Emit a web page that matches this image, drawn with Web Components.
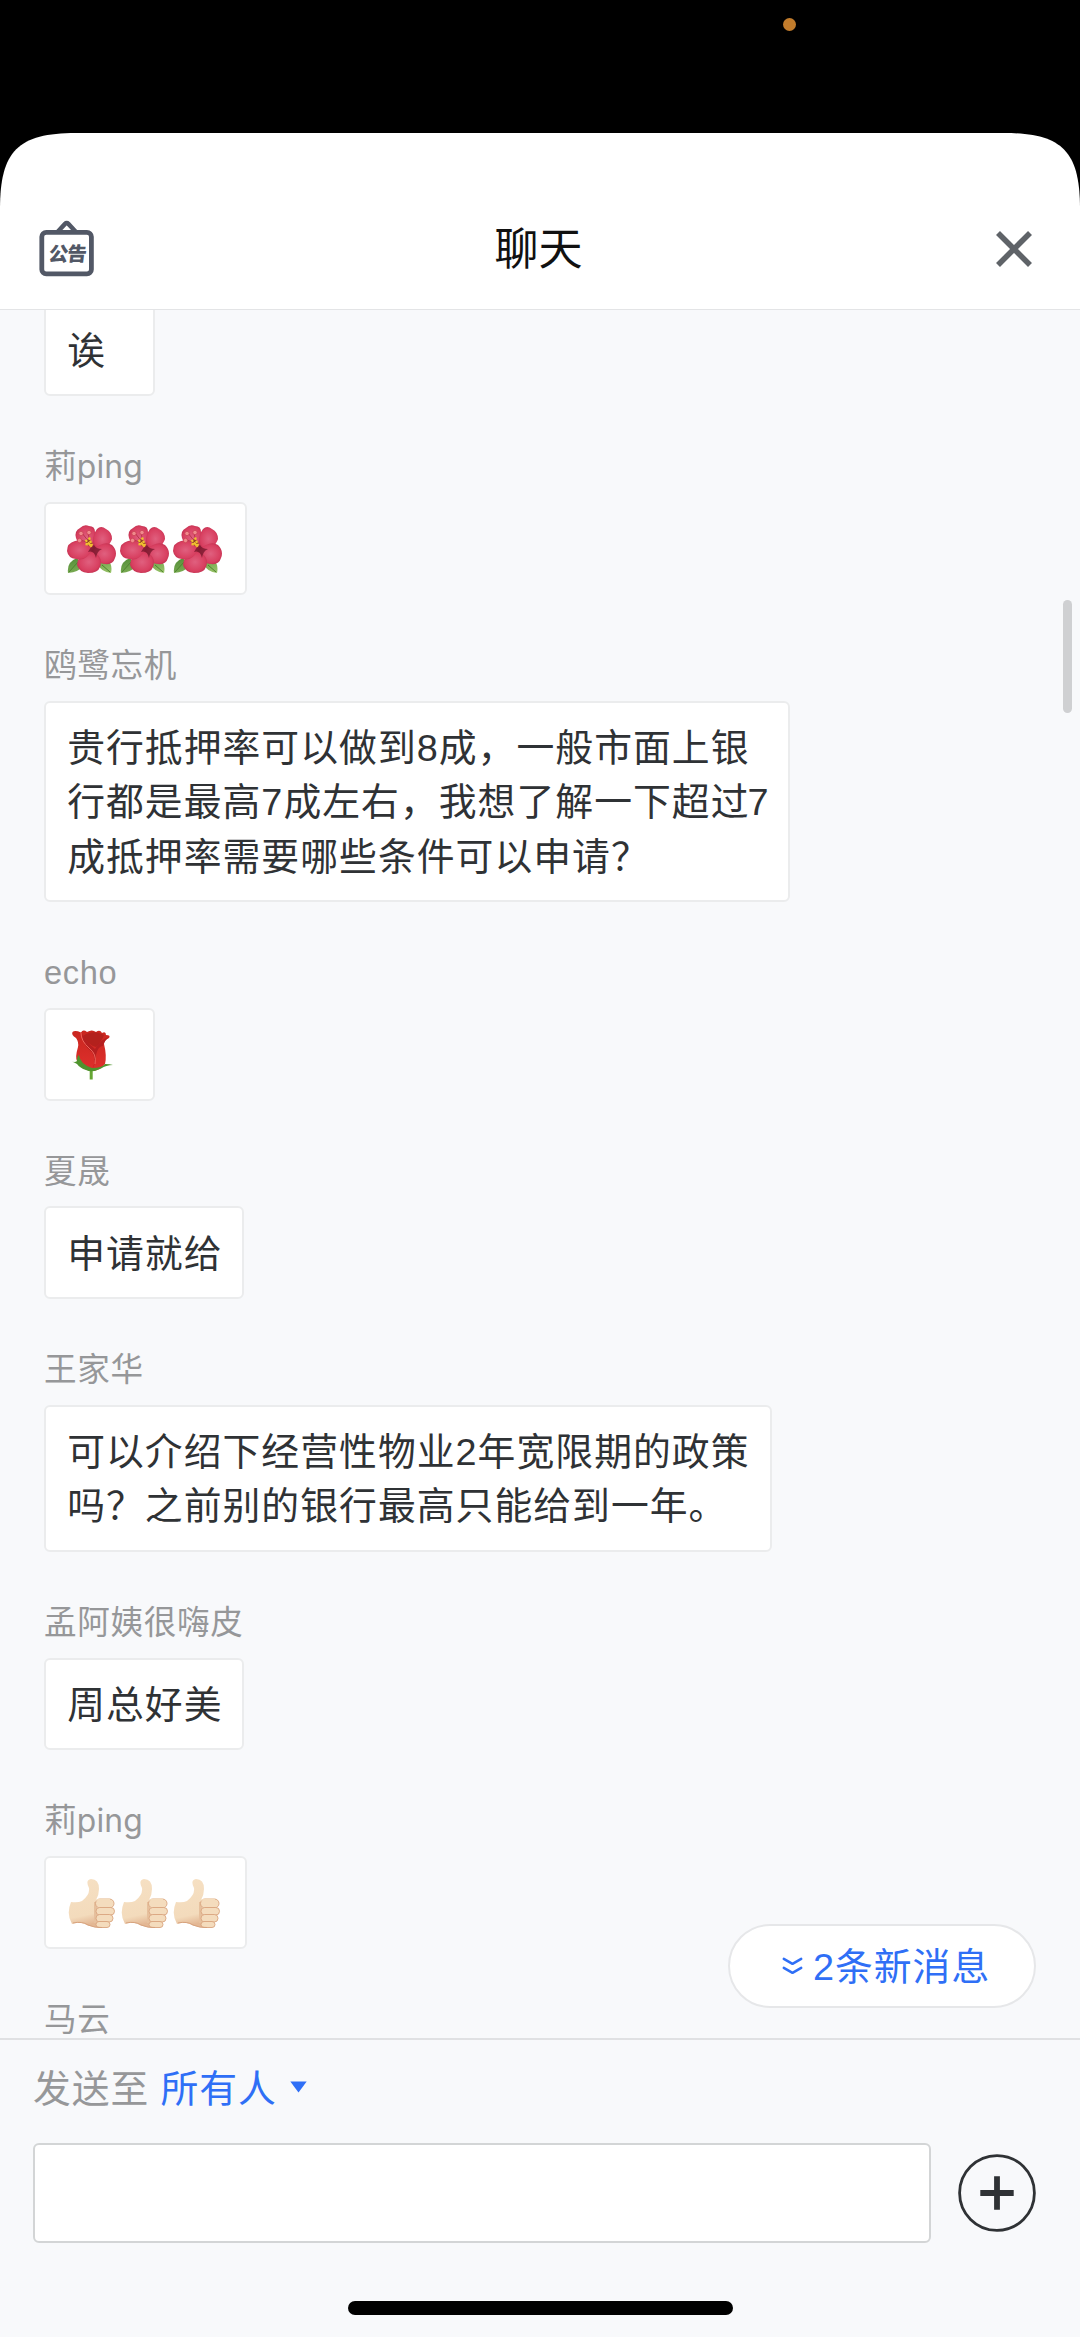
<!DOCTYPE html>
<html lang="zh-CN">
<head>
<meta charset="utf-8">
<title>聊天</title>
<style>
html,body{margin:0;padding:0;background:#000}
body{font-family:"Liberation Sans","Noto Sans CJK SC",sans-serif;width:1080px;height:2337px;overflow:hidden}
</style>
</head>
<body>
<chat-screen></chat-screen>
<script>
const define = (name, html) => {
  const tpl = document.createElement('template');
  tpl.innerHTML = html;
  customElements.define(name, class extends HTMLElement {
    constructor() {
      super();
      this.attachShadow({ mode: 'open' }).appendChild(tpl.content.cloneNode(true));
    }
  });
};

define('status-strip', `
<style>
:host{display:flex;height:133px;background:#000;flex:none;box-sizing:border-box;padding:18px 0 0 783px}
i{width:13px;height:13px;border-radius:50%;background:#c27c2c}
</style><i></i>`);

define('notice-icon', `
<style>:host{display:block;width:56px;height:58px}svg{display:block}
text{font:900 19.5px "Noto Sans CJK SC",sans-serif;fill:#525866;stroke:none}</style>
<svg width="56" height="58" viewBox="0 0 56 58" fill="none" stroke="#525866">
<rect x="2.8" y="13.3" width="49.6" height="41.6" rx="4.5" stroke-width="4.8"/>
<path d="M18 13.5 26 4.9q1.7-1.7 3.4 0L37.4 13.5" stroke-width="4.4"/>
<text transform="translate(9 41.5) skewX(-7)" textLength="38">公告</text>
</svg>`);

define('close-icon', `
<style>:host{display:block;width:36px;height:36px}svg{display:block}</style>
<svg width="36" height="36" viewBox="0 0 36 36"><path d="M2 2 34 34M34 2 2 34" stroke="#5f6368" stroke-width="5.6"/></svg>`);

define('chat-header', `
<style>
:host{display:flex;flex:none;height:177px;box-sizing:border-box;background:#fff;border-bottom:1px solid #e3e4e6;
padding:57px 48px 0 39px;align-items:center;justify-content:space-between;
clip-path:path("M0 76C0 18 18 0 76 0H1004C1062 0 1080 18 1080 76V177H0Z")}
notice-icon{margin-top:-3px}
h1{margin:0 0 0 6px;font-size:44px;font-weight:400;color:#111;line-height:60px}
close-icon{margin:0 0 2px 20px}
</style>
<notice-icon></notice-icon><h1><slot></slot></h1><close-icon></close-icon>`);

define('chat-message', `
<style>
:host{display:flex;flex-direction:column;align-items:flex-start;flex:none;margin-bottom:48px}
.name{height:46px;line-height:46px;font-size:32.6px;letter-spacing:.65px;color:#969799;margin-bottom:11.9px;white-space:nowrap}
.bubble{box-sizing:border-box;width:var(--w);background:#fff;border:2px solid #ebeced;border-radius:6px;
padding:18.1px 0 16.1px 21.2px;font-size:37.8px;letter-spacing:1.04px;line-height:54.4px;color:#2f3235;white-space:nowrap}
::slotted(span){display:block;height:54.4px}
::slotted(span[slot=name]){height:46px}
</style>
<div class="name"><slot name="name"></slot></div>
<div class="bubble"><slot></slot></div>`);

define('emoji-hibiscus', `
<style>:host{display:inline-block;width:52.7px;height:54px;vertical-align:top}svg{display:block}</style>
<svg width="50" height="54" viewBox="0 -1 50 54">
<defs>
<radialGradient id="p" cx=".5" cy=".5" r=".6"><stop offset="0" stop-color="#e0607f"/><stop offset=".7" stop-color="#d83f60"/><stop offset="1" stop-color="#b52a48"/></radialGradient>
<linearGradient id="l" x2="1" y2="1"><stop stop-color="#4f8a35"/><stop offset="1" stop-color="#9bc56a"/></linearGradient>
</defs>
<path d="M1 50Q-.5 39 10 35L16 43Q12 49 1 50ZM44 50Q46 41 40 37L31 41Q34 49 44 50Z" fill="url(#l)"/>
<path d="M2 49 11 39M43 49 35 42" stroke="#4e842f" fill="none"/>
<circle cx="25" cy="26" r="14" fill="#b02a48"/>
<path d="M25 28Q11 24 9 15Q7 8 13 5Q17 1 22 3Q28 3 28 9Q32 17 29 26Z" fill="url(#p)"/>
<path d="M27 27Q24 13 30 6Q34 2 39 6Q45 9 45 16Q42 26 27 28Z" fill="url(#p)"/>
<path d="M26 27Q37 17 45 22Q51 28 48 35Q46 42 38 41Q29 41 26 27Z" fill="url(#p)"/>
<path d="M25 28Q37 34 33 44Q31 50 21 50Q12 49 10 42Q11 30 25 28Z" fill="url(#p)"/>
<path d="M25 27Q19 39 9 36Q1 35 0 28Q0 20 8 18Q17 15 25 27Z" fill="url(#p)"/>
<path d="M24 24 21 29Q27 27 29 35Q30 28 35 26Q29 26 27 22Z" fill="#70152a" opacity=".75"/>
<path d="M22 19 15 10M23 19 21 10M20 19 13 17" stroke="#b8354c"/>
<g fill="#f08a8c" stroke="#c73b4f" stroke-width=".7"><circle cx="14" cy="10.500" r="2.200"/><circle cx="22" cy="9.500" r="2.200"/><circle cx="12.500" cy="17.500" r="2.200"/></g>
<path d="m20 17 4 5" stroke="#8a3a24" stroke-width="5"/>
<path d="m18.500 17 6.500 7M22 14.500l3 8M18.500 21l6 1" stroke="#f0c030" stroke-width="2.300" stroke-dasharray="2.400 1"/>
</svg>`);

define('emoji-rose', `
<style>:host{display:inline-block;width:52.7px;height:54px;vertical-align:top}svg{display:block}</style>
<svg width="50" height="54" viewBox="0 0 50 54">
<defs><linearGradient id="r" x2="0" y2="1"><stop stop-color="#c9261f"/><stop offset="1" stop-color="#df302d"/></linearGradient></defs>
<path d="M24.200 40V51.500" stroke="#66a634" stroke-width="3"/>
<path d="M9 10Q4 7 5.500 4Q8 2 14 4.500Q16 1 20 4Q25 1 29 4Q33 1 35 5Q39 3 39 7Q44 7 42 10Q37 12 37 16Q40 28 38 36Q33 43 25 43Q12 41 10 33Q8 29 11 19Q12 14 9 10Z" fill="url(#r)"/>
<path d="M16 8Q26 1 37 7Q35 13 29 19Q21 17 16 8Z" fill="#b3211d"/>
<path d="M15 5Q17 12 28 21Q34 11 42 9Q37 13 36 18Q31 18 29 27Q28 37 25 42Q30 32 25 24Q15 17 15 5Z" fill="#b51f20"/>
<path d="M14 5Q14 13 22 20Q30 26 28 36" stroke="#ee655b" fill="none"/>
<path d="M3 33Q8 35 10 33Q10 28 12 27Q13 36 25 40Q35 40 38 36Q43 36 46 37Q39 37 34 40.500Q25 45 19 42Q13 40 10 36Q7 34 3 33Z" fill="#4f942e"/>
</svg>`);

define('emoji-thumb', `
<style>:host{display:inline-block;width:52.4px;height:54px;vertical-align:top}svg{display:block}</style>
<svg width="50" height="54" viewBox="-1 -2 50 54">
<defs><linearGradient id="s" x2=".15" y2="1"><stop stop-color="#f6e0c3"/><stop offset=".8" stop-color="#f3dbbc"/><stop offset="1" stop-color="#e3b794"/></linearGradient></defs>
<path d="M3 24Q10 25 14 23Q22 17 21 10Q17 2 23 1Q31 1 31 11Q31 17 28 22L30 44Q37 48 34 49.500Q27 50 20 47.500Q14 43 4 46Q-2 36 3 24Z" fill="url(#s)"/>
<path d="M27.500 24V45" stroke="#e6c09d" stroke-width="3"/>
<g fill="#f4dcbd" stroke="#d9a57f" stroke-width=".9"><rect x="27.500" y="21" width="18.500" height="9" rx="4.500"/><rect x="28" y="29.500" width="18.500" height="7.500" rx="3.700"/><rect x="28" y="36.500" width="17" height="7.500" rx="3.700"/><rect x="28" y="43.500" width="14" height="6" rx="3"/></g>
<path d="M28.500 22.500Q29 21 36 21.500H42" stroke="#f4dcbd" stroke-width="2" fill="none"/>
<path d="M5 45Q14 43 20 47Q27 50 34 49.500" stroke="#d7a27d" fill="none"/>
</svg>`);

define('scroll-thumb', `<style>:host{display:block;position:absolute;right:8px;top:290px;width:9px;height:113px;border-radius:5px;background:#cfd0d2}</style>`);

define('new-messages', `
<style>
:host{position:absolute;right:44px;bottom:30.500px;width:308px;height:84px;box-sizing:border-box;border:2px solid #e6e7e9;border-radius:42px;
background:#fff;display:flex;align-items:center;padding-left:52px;gap:10px;color:#2f6ff6;font-size:37.8px;letter-spacing:1px;white-space:nowrap}
b{font-weight:400;line-height:54px;margin-top:3px}
</style>
<svg width="21" height="18" viewBox="0 0 21 18" fill="none" stroke="#2f6ff6" stroke-width="2.500" stroke-linecap="round" stroke-linejoin="round"><path d="m1.800 1.800 8.700 5 8.700-5m-17.400 9 8.700 5 8.700-5"/></svg>
<b><slot></slot></b>`);

define('message-list', `
<style>
:host{display:block;position:relative;height:1728px;flex:none;overflow:hidden;background:#f8f9fb}
.flow{display:flex;flex-direction:column;padding-left:44px;margin-top:-64.100px}
.latin{font:400 31.800px Inter,sans-serif;letter-spacing:.2px;margin-left:-.5px}
.digit{margin-left:-2px}
</style>
<div class="flow">
<chat-message style="--w:111px"><span>诶</span></chat-message>
<chat-message style="--w:203px"><span slot="name">莉<span class="latin">ping</span></span><span><emoji-hibiscus></emoji-hibiscus><emoji-hibiscus></emoji-hibiscus><emoji-hibiscus></emoji-hibiscus></span></chat-message>
<chat-message style="--w:746px"><span slot="name">鸥鹭忘机</span><span>贵行抵押率可以做到8成，一般市面上银</span><span>行都是最高7成左右，我想了解一下超过<span class="digit">7</span></span><span>成抵押率需要哪些条件可以申请？</span></chat-message>
<chat-message style="--w:111px"><span slot="name">echo</span><span><emoji-rose></emoji-rose></span></chat-message>
<chat-message style="--w:200px"><span slot="name">夏晟</span><span>申请就给</span></chat-message>
<chat-message style="--w:728px"><span slot="name">王家华</span><span>可以介绍下经营性物业2年宽限期的政策</span><span>吗？之前别的银行最高只能给到一年。</span></chat-message>
<chat-message style="--w:200px"><span slot="name">孟阿姨很嗨皮</span><span>周总好美</span></chat-message>
<chat-message style="--w:203px"><span slot="name">莉<span class="latin">ping</span></span><span><emoji-thumb></emoji-thumb><emoji-thumb></emoji-thumb><emoji-thumb></emoji-thumb></span></chat-message>
<chat-message style="--w:200px"><span slot="name">马云</span></chat-message>
</div>
<scroll-thumb></scroll-thumb>
<new-messages>2条新消息</new-messages>`);

define('recipient-picker', `
<style>
:host{display:flex;align-items:center;height:56px;font-size:37.8px;letter-spacing:1px;color:#969799;line-height:56px}
span,b{margin-top:2px}
b{font-weight:400;color:#2f6ff6;margin-left:11px}
svg{margin:-2px 0 0 13px}
</style>
<span>发送至</span><b>所有人</b><svg width="17" height="12" viewBox="0 0 17 12"><path d="M.3.500H16.700L8.500 11.500Z" fill="#2f6ff6"/></svg>`);

define('add-button', `
<style>:host{display:block;width:78px;height:78px}svg{display:block}</style>
<svg width="78" height="78" viewBox="0 0 78 78" fill="none" stroke="#2f3235"><circle cx="39" cy="39" r="37.400" stroke-width="2.800"/><path d="M22.300 39H55.700M39 22.300V55.700" stroke-width="5.800"/></svg>`);

define('chat-composer', `
<style>
:host{display:flex;flex-direction:column;flex:none;height:299px;box-sizing:border-box;background:#f8f9fb;border-top:2px solid #e0e1e3;padding:20px 44px 22px 33px}
.row{display:flex;align-items:center;justify-content:space-between;margin-top:27px}
.field{width:898px;height:100px;box-sizing:border-box;background:#fff;border:2px solid #d3d5d6;border-radius:6px}
.home{width:385px;height:14px;border-radius:7px;background:#000;margin:auto 0 0 315px}
</style>
<recipient-picker></recipient-picker>
<div class="row"><div class="field"></div><add-button></add-button></div>
<div class="home"></div>`);

define('chat-screen', `
<style>:host{display:flex;flex-direction:column;width:1080px;height:2337px;background:#000;overflow:hidden}</style>
<status-strip></status-strip>
<chat-header>聊天</chat-header>
<message-list></message-list>
<chat-composer></chat-composer>`);
</script>
</body>
</html>
